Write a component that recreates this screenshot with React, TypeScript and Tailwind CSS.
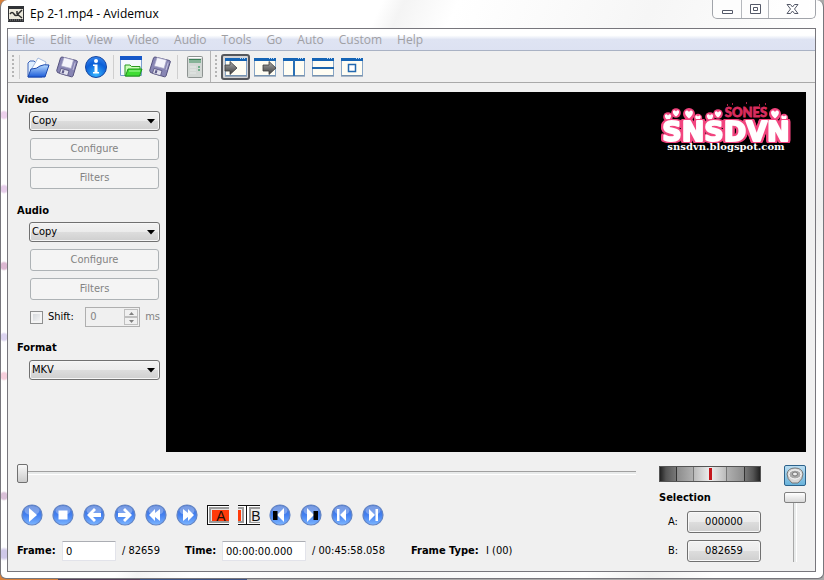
import React from "react";

const menus = ["File", "Edit", "View", "Video", "Audio", "Tools", "Go", "Auto", "Custom", "Help"];

function FolderIcon() {
  return (
    <svg width="24" height="24" viewBox="0 0 24 24" aria-hidden="true">
      <defs>
        <linearGradient id="folder" x1="0" y1="0" x2="0" y2="1">
          <stop offset="0" stopColor="#b9dcff" />
          <stop offset="1" stopColor="#1b5bd8" />
        </linearGradient>
      </defs>
      <path d="M2 22V8l2-2h4l2 2h6v14z" fill="#dfeeff" stroke="#3a62b8" />
      <path d="M5 15 12 3l8 4-3 12z" fill="#fff" stroke="#8fa9d6" strokeWidth=".8" />
      <path d="M2 22 5 14q6 0 9-3 4-2 9-1l-4 12z" fill="url(#folder)" stroke="#1c49ad" />
    </svg>
  );
}

function FloppyIcon() {
  return (
    <svg width="24" height="24" viewBox="0 0 24 24" aria-hidden="true">
      <path d="M7 2 21.500 5.500q1 .3.8 1.400L18 21q-.5 1-1.600.8L2.500 17.500l-.800-2L5.500 3Q6 2 7 2z" fill="#8886b4" stroke="#55527e" />
      <path d="m9 2.500 9.500 2.500-2.400 8.500-9.800-2.500z" fill="#f4f4fb" stroke="#a5a4c4" strokeWidth=".7" />
      <path d="m6 13.500 8 2.200-1.500 5-8-2.300z" fill="#e2e2ee" stroke="#55527e" strokeWidth=".8" />
      <path d="m7.500 15 2 .6-.9 3-2-.6z" fill="#5c5988" />
      <path d="m18 15 2.200-7.500" stroke="#c3c1de" />
    </svg>
  );
}

function InfoIcon() {
  return (
    <svg width="24" height="24" viewBox="0 0 24 24" aria-hidden="true">
      <defs>
        <radialGradient id="info" cx=".5" cy=".85" r=".9">
          <stop offset="0" stopColor="#35b5ff" />
          <stop offset=".6" stopColor="#0c5fd8" />
          <stop offset="1" stopColor="#3f8df0" />
        </radialGradient>
      </defs>
      <circle cx="12" cy="12" r="10.500" fill="url(#info)" stroke="#1747a0" />
      <circle cx="12" cy="6" r="2" fill="#fff" />
      <path d="M9 9.500h4.500V17H15v1.500H9V17h1.500v-6H9z" fill="#fff" />
    </svg>
  );
}

function LoadVideoIcon() {
  return (
    <svg width="24" height="24" viewBox="0 0 24 24" aria-hidden="true">
      <path d="M1.500 1.500h21v19h-21z" fill="#f4f8ff" stroke="#7d9fd0" />
      <path d="M1 1h22v4H1z" fill="#1557c8" />
      <path d="M6 21V10h5l1.500 1.500H21V21z" fill="#c9ffb8" stroke="#2a9a22" />
      <path d="M6.500 21 9 14h14l-2.500 7z" fill="#3fdc34" stroke="#1f9420" />
      <path d="M10 16h11" stroke="#a8ff9c" />
    </svg>
  );
}

function CalculatorIcon() {
  return (
    <svg width="24" height="24" viewBox="0 0 24 24" aria-hidden="true">
      <rect x="4.500" y="1.500" width="15" height="21" rx="1" fill="#d3d8d5" stroke="#8d9391" />
      <path d="M5.500 2.500h13" stroke="#fff" />
      <path d="M6 4h12v4H6z" fill="#86b398" />
      <path d="M6 4.500h12" stroke="#3d8059" />
      <path d="M7 12h6M7 15h6M7 18h6" stroke="#e6eae8" />
      <path d="M15 12h2M15 15h2" stroke="#4fa070" strokeWidth="1.500" />
    </svg>
  );
}

type PaneKind = "input" | "output" | "side" | "top" | "separate";

function PaneIcon({ kind }: { kind: PaneKind }) {
  return (
    <svg width="24" height="22" viewBox="0 0 24 22" aria-hidden="true">
      <defs>
        <linearGradient id="arrow" x1="0" y1="0" x2="0" y2="1">
          <stop offset="0" stopColor="#aaa" />
          <stop offset="1" stopColor="#3c3c3c" />
        </linearGradient>
      </defs>
      <path d="M1.500 2.500h21v17h-21z" fill="#fffdf3" stroke="#86a5c6" />
      <path d="M1 20h22" stroke="#657f9c" />
      <path d="M1 2h22v3H1z" fill="#1564b5" />
      <path d="M16 2.500h6" stroke="#b4d5f5" strokeDasharray="1 1" />
      {kind === "input" && <path d="M1 9h5V5.500l7 6.500-7 6.500V15H1z" fill="url(#arrow)" stroke="#3b3b3b" strokeWidth=".8" />}
      {kind === "output" && <path d="M10 9h6V5.500l7 6.500-7 6.500V15h-6z" fill="url(#arrow)" stroke="#3b3b3b" strokeWidth=".8" />}
      {kind === "side" && <path d="M12 4v16" stroke="#2a70b5" strokeWidth="2" />}
      {kind === "top" && <path d="M1 12h22" stroke="#1d65ac" strokeWidth="2" />}
      {kind === "separate" && <path d="M8.500 8.500h7v7h-7z" fill="#fff" stroke="#2369af" strokeWidth="1.500" />}
    </svg>
  );
}

function Orb({ d, bar }: { d: string; bar?: string }) {
  return (
    <svg width="22" height="22" viewBox="0 0 22 22" aria-hidden="true">
      <defs>
        <linearGradient id="orb" x1="0" y1="0" x2="0" y2="1">
          <stop offset="0" stopColor="#3f6fd2" />
          <stop offset=".5" stopColor="#4480f0" />
          <stop offset="1" stopColor="#7db6ff" />
        </linearGradient>
      </defs>
      <circle cx="11" cy="11" r="10" fill="url(#orb)" stroke="#6284c4" strokeWidth="1.200" />
      <ellipse cx="11" cy="6.500" rx="7.500" ry="4.500" fill="#fff" opacity=".3" />
      <path d={d} fill="#fff" />
      {bar && <path d={bar} fill="#000" />}
    </svg>
  );
}

function MarkerA() {
  return (
    <svg width="22" height="22" viewBox="0 0 22 22" aria-hidden="true">
      <path d="M0 1h22v20H0z" fill="#111" />
      <path d="M1 2h21v18H1z" fill="#fff" />
      <path d="M2 3h20v16H2z" fill="#9c9c9c" />
      <path d="M4 5h18v12H4z" fill="#e2e2e2" />
      <path d="M5 6h17v11H5z" fill="#ff3b0b" />
      <text x="14" y="17" textAnchor="middle" fontSize="14" fill="#201008" fontFamily="Liberation Sans, sans-serif">A</text>
    </svg>
  );
}

function MarkerB() {
  return (
    <svg width="22" height="22" viewBox="0 0 22 22" aria-hidden="true">
      <path d="M0 1h22v20H0z" fill="#111" />
      <path d="M0 2h22v18H0z" fill="#fff" />
      <path d="M0 3h6v16H0zM11 3h11v16H11z" fill="#9c9c9c" />
      <path d="M0 5h4v12H0zM13 5h9v13h-9z" fill="#ececec" />
      <path d="M0 6h3v11H0z" fill="#ff3b0b" />
      <path d="M8.500 1v20" stroke="#111" />
      <text x="18" y="17" textAnchor="middle" fontSize="14" fill="#111" fontFamily="Liberation Sans, sans-serif">B</text>
    </svg>
  );
}

function Heart({ x, y, s }: { x: number; y: number; s: number }) {
  return (
    <g transform={`translate(${x} ${y}) scale(${s})`}>
      <circle r="6" fill="#f2457f" />
      <path d="M0 4.500C-7-1-3-6 0-2 3-6 7-1 0 4.500z" fill="#fff" />
    </g>
  );
}

function ChannelLogo() {
  return (
    <svg width="140" height="60" viewBox="0 0 140 60" className="absolute top-2 right-2.5">
      <text x="90" y="17" textAnchor="middle" fontSize="13" fontWeight="900" fill="#d92c5e" stroke="#d92c5e" strokeWidth=".8" fontFamily="Lato, sans-serif">SONES</text>
      <path d="M71 5h1M76 4h1M90 3h1M103 5h1M109 4h1" stroke="#d92c5e" strokeWidth="1.500" />
      <Heart x={12} y={17} s={0.8} />
      <Heart x={20} y={13} s={0.8} />
      <Heart x={33} y={14} s={1} />
      <Heart x={42} y={18} s={0.7} />
      <Heart x={54} y={17} s={0.8} />
      <Heart x={62} y={14} s={0.8} />
      <Heart x={119} y={14} s={1} />
      <Heart x={128} y={18} s={0.7} />
      <text
        x="70"
        y="41"
        textAnchor="middle"
        fontSize="27"
        fontWeight="700"
        fill="#fff"
        stroke="#fff"
        strokeWidth="2"
        strokeLinejoin="round"
        fontFamily="DejaVu Sans, sans-serif"
        className="[filter:drop-shadow(2px_0_0_#f2457f)_drop-shadow(-2px_0_0_#f2457f)_drop-shadow(0_1px_0_#f2457f)_drop-shadow(0_-1px_0_#f2457f)]"
      >
        SNSDVN
      </text>
      <text x="70" y="50" textAnchor="middle" fontSize="10" fontWeight="700" fill="#fff" fontFamily="DejaVu Serif, serif">snsdvn.blogspot.com</text>
    </svg>
  );
}

function Grip() {
  return <span className="h-6 w-0.5 bg-[repeating-linear-gradient(to_bottom,#b5b5b5_0px,#b5b5b5_2px,transparent_2px,transparent_4px)]" />;
}

function ToolButton({ label, pressed, children }: { label: string; pressed?: boolean; children: React.ReactNode }) {
  return (
    <button
      aria-label={label}
      className={
        pressed
          ? "flex h-[26px] w-[29px] items-center justify-center rounded-[3px] border-2 border-[#55575c] bg-[#d4d4d6]"
          : "flex h-[26px] w-[29px] items-center justify-center"
      }
    >
      {children}
    </button>
  );
}

function Combo({ label, value }: { label: string; value: string }) {
  return (
    <div className="relative ml-3 h-5">
      <select
        aria-label={label}
        defaultValue={value}
        className="block h-5 w-full appearance-none rounded-[3px] border border-[#707070] bg-[linear-gradient(#f2f2f2_0%,#ebebeb_50%,#dddddd_50%,#cfcfcf_100%)] pl-[2px] leading-4 shadow-[inset_0_0_0_1px_#f6f6f6]"
      >
        <option>{value}</option>
      </select>
      <svg width="8" height="5" viewBox="0 0 8 5" className="pointer-events-none absolute top-2 right-[5px]" aria-hidden="true">
        <path d="M0 0h8L4 4.500z" fill="#000" />
      </svg>
    </div>
  );
}

function DisabledButton({ children }: { children: React.ReactNode }) {
  return (
    <button disabled className="mr-px ml-[13px] h-[22px] rounded-[3px] border border-[#adb2b5] bg-[#f4f4f4] text-[#838383]">
      {children}
    </button>
  );
}

function PushButton({ id, children }: { id: string; children: React.ReactNode }) {
  return (
    <button id={id} className="h-[22px] w-[74px] rounded-[3px] border border-[#707070] bg-[linear-gradient(#f2f2f2_0%,#ebebeb_50%,#dddddd_50%,#cfcfcf_100%)] shadow-[inset_0_0_0_1px_#f8f8f8]">
      {children}
    </button>
  );
}

const transport = [
  { label: "Play", d: "M8 4v14l8-7z" },
  { label: "Stop", d: "M6.500 6.500h9v9h-9z" },
  { label: "Previous frame", d: "m4 11 7-7 2 2-3 3h8v4h-8l3 3-2 2z" },
  { label: "Next frame", d: "m18 11-7-7-2 2 3 3H4v4h8l-3 3 2 2z" },
  { label: "Previous intra frame", d: "m4 11 6-6v4l5-4v12l-5-4v4z" },
  { label: "Next intra frame", d: "m18 11-6-6v4L7 5v12l5-4v4z" },
];

const jumps = [
  { label: "Previous black frame", d: "m8 11 7-7v14z", bar: "M4 7h4.500v9H4z" },
  { label: "Next black frame", d: "m14 11-7-7v14z", bar: "M13.500 7H18v9h-4.500z" },
  { label: "First frame", d: "M6 5h2.500v12H6zM9 11l6-6v12z" },
  { label: "Last frame", d: "M13.500 5H16v12h-2.500zM13 11 7 5v12z" },
];

function TitleBar() {
  return (
    <header className="flex h-7 items-start justify-between pl-px">
      <div className="flex h-7 items-center gap-1.5">
        <svg width="16" height="16" viewBox="0 0 16 16" aria-hidden="true">
          <path d="M0 0h16v16H0z" fill="#303236" />
          <path d="M1 3h14v10H1z" fill="#ece9dc" />
          <path d="M2 8q2-3 4 0t4 0l4-4M9 8l5 4M9 5v3" stroke="#2d2d2d" strokeWidth="1.500" fill="none" />
          <path d="M0 14h16" stroke="#888" strokeDasharray="1 1" />
        </svg>
        <h1 className="font-['Open_Sans','Noto_Sans',sans-serif] text-[12px] leading-4">Ep 2-1.mp4 - Avidemux</h1>
      </div>
      <div className="flex h-[19px] rounded-b-[5px] border border-t-0 border-[#a1a4aa] bg-white/60">
        <button aria-label="Minimize" className="flex w-7 items-center justify-center">
          <svg width="13" height="13" viewBox="0 0 13 13"><path d="M1.500 7.500h10v3h-10z" fill="#fff" stroke="#545968" /></svg>
        </button>
        <button aria-label="Maximize" className="flex w-7 items-center justify-center border-x border-[#b5b8bd]">
          <svg width="13" height="13" viewBox="0 0 13 13"><path d="M1.500 1.500h10v9h-10zM4.500 4.500h4v3h-4z" fill="#fff" stroke="#545968" /></svg>
        </button>
        <button aria-label="Close" className="flex w-[46px] items-center justify-center">
          <svg width="13" height="13" viewBox="0 0 13 13"><path d="M1 1.500h3.500l2 2.500 2-2.500H12L8.500 6l3.500 4.500H8.500l-2-2.500-2 2.500H1L4.500 6z" fill="#fff" stroke="#545968" /></svg>
        </button>
      </div>
    </header>
  );
}

function Toolbars() {
  return (
    <div className="flex h-8 items-center border-b border-[#a9a9a9] bg-[#f0f0f0]">
      <div className="flex h-full items-center border-r border-[#b4b4b4] pr-px pl-1">
        <Grip />
        <span className="mr-[3px] ml-[5px] h-6 w-px bg-[#cfcfcf]" />
        <ToolButton label="Open video"><FolderIcon /></ToolButton>
        <ToolButton label="Save video"><FloppyIcon /></ToolButton>
        <ToolButton label="Information"><InfoIcon /></ToolButton>
        <span className="mr-[2px] ml-[3px] h-6 w-px bg-[#cfcfcf]" />
        <ToolButton label="Load project"><LoadVideoIcon /></ToolButton>
        <ToolButton label="Save project"><FloppyIcon /></ToolButton>
        <span className="mr-[2px] ml-[3px] h-6 w-px bg-[#cfcfcf]" />
        <ToolButton label="Calculator"><CalculatorIcon /></ToolButton>
      </div>
      <div className="flex h-full items-center pl-1">
        <Grip />
        <span className="w-1" />
        <ToolButton label="Display input" pressed><PaneIcon kind="input" /></ToolButton>
        <ToolButton label="Display output"><PaneIcon kind="output" /></ToolButton>
        <ToolButton label="Side by side"><PaneIcon kind="side" /></ToolButton>
        <ToolButton label="Top and bottom"><PaneIcon kind="top" /></ToolButton>
        <ToolButton label="Separate window"><PaneIcon kind="separate" /></ToolButton>
      </div>
    </div>
  );
}

function Sidebar() {
  return (
    <aside className="flex w-[152px] flex-col pl-[9px]">
      <section className="flex flex-col gap-[7px]">
        <h2 className="-mb-1 h-4 font-bold">Video</h2>
        <Combo label="Video codec" value="Copy" />
        <DisabledButton>Configure</DisabledButton>
        <DisabledButton>Filters</DisabledButton>
      </section>
      <section className="mt-3.5 flex flex-col gap-[7px]">
        <h2 className="-mb-1 h-4 font-bold">Audio</h2>
        <Combo label="Audio codec" value="Copy" />
        <DisabledButton>Configure</DisabledButton>
        <DisabledButton>Filters</DisabledButton>
        <div className="ml-[13px] flex h-5 items-center">
          <label className="flex items-center gap-[5px]">
            <input type="checkbox" className="size-[13px] appearance-none border border-[#8e8f8f] bg-linear-to-br from-[#cfd2d6] to-[#fafafa] shadow-[inset_0_0_0_2px_#f4f4f4]" />
            Shift:
          </label>
          <div className="ml-auto flex h-5 w-[55px] border border-[#afafaf] p-px">
            <input aria-label="Shift amount" disabled defaultValue="0" className="w-0 flex-1 pl-[3px] text-[#838383]" />
            <div className="flex w-[14px] flex-col">
              <button disabled aria-label="Increase" className="flex h-2 items-center justify-center border border-[#bfbfbf]">
                <svg width="5" height="3" viewBox="0 0 5 3"><path d="M0 3h5L2.500 0z" fill="#808080" /></svg>
              </button>
              <button disabled aria-label="Decrease" className="flex h-2 items-center justify-center border border-[#bfbfbf]">
                <svg width="5" height="3" viewBox="0 0 5 3"><path d="M0 0h5L2.500 3z" fill="#808080" /></svg>
              </button>
            </div>
          </div>
          <span className="ml-[5px] text-[#838383]">ms</span>
        </div>
      </section>
      <section className="mt-[13px] flex flex-col gap-1">
        <h2 className="h-4 font-bold">Format</h2>
        <Combo label="Output format" value="MKV" />
      </section>
    </aside>
  );
}

function Controls() {
  return (
    <footer className="flex gap-[23px] pt-[11px] pr-[9px] pb-[9px] pl-[9px]">
      <div className="flex min-w-0 flex-1 flex-col">
        <input
          type="range"
          aria-label="Position"
          defaultValue={0}
          className="h-5 w-full appearance-none bg-transparent [&::-webkit-slider-runnable-track]:h-1 [&::-webkit-slider-runnable-track]:border-t [&::-webkit-slider-runnable-track]:border-b [&::-webkit-slider-runnable-track]:border-t-[#a0a0a0] [&::-webkit-slider-runnable-track]:border-b-white [&::-webkit-slider-runnable-track]:bg-[#e8eaea] [&::-webkit-slider-thumb]:-mt-2 [&::-webkit-slider-thumb]:h-[19px] [&::-webkit-slider-thumb]:w-[11px] [&::-webkit-slider-thumb]:appearance-none [&::-webkit-slider-thumb]:rounded-[2px] [&::-webkit-slider-thumb]:border [&::-webkit-slider-thumb]:border-[#707070] [&::-webkit-slider-thumb]:bg-linear-to-b [&::-webkit-slider-thumb]:from-[#f8f8f8] [&::-webkit-slider-thumb]:to-[#cccccc]"
        />
        <div className="mt-[21px] flex gap-[9px] pl-1">
          {transport.map((b) => (
            <button key={b.label} aria-label={b.label}><Orb d={b.d} /></button>
          ))}
          <button aria-label="Set start marker"><MarkerA /></button>
          <button aria-label="Set end marker"><MarkerB /></button>
          {jumps.map((b) => (
            <button key={b.label} aria-label={b.label}><Orb d={b.d} bar={b.bar} /></button>
          ))}
        </div>
        <div className="mt-[15px] flex h-5 items-center whitespace-nowrap">
          <label htmlFor="frame" className="w-[45px] font-bold">Frame:</label>
          <input id="frame" defaultValue="0" className="h-5 w-[54px] rounded-[1px] border border-[#e2e3ea] border-t-[#abadb3] bg-white px-[3px]" />
          <span className="w-[69px] pl-1.5">/ 82659</span>
          <label htmlFor="time" className="w-[37px] font-bold">Time:</label>
          <input id="time" defaultValue="00:00:00.000" className="h-5 w-[84px] rounded-[1px] border border-[#e2e3ea] border-t-[#abadb3] bg-white px-[3px]" />
          <span className="w-[105px] pl-1.5">/ 00:45:58.058</span>
          <b className="w-[75px]">Frame Type:</b>
          <span>I (00)</span>
        </div>
      </div>
      <div className="flex w-[102px] flex-col pt-[3px]">
        <input
          type="range"
          aria-label="Jog"
          defaultValue={50}
          className="h-4 w-full appearance-none border border-[#555] bg-[linear-gradient(90deg,#222_0%,#555_6%,#777_16%,#333_16%,#333_17%,#8c8c8c_17%,#b0b0b0_33%,#777_33%,#777_34%,#bbb_34%,#eee_50%,#bbb_66%,#777_66%,#777_67%,#b0b0b0_67%,#8c8c8c_84%,#333_84%,#333_85%,#777_85%,#555_93%,#222_100%)] [&::-webkit-slider-thumb]:h-3 [&::-webkit-slider-thumb]:w-[3px] [&::-webkit-slider-thumb]:appearance-none [&::-webkit-slider-thumb]:bg-[#c4161c]"
        />
        <h2 className="mt-2 h-4 font-bold">Selection</h2>
        <div className="mt-[5px] flex items-center justify-between pl-[9px]">
          <label htmlFor="mark-a">A:</label>
          <PushButton id="mark-a">000000</PushButton>
        </div>
        <div className="mt-[7px] flex items-center justify-between pl-[9px]">
          <label htmlFor="mark-b">B:</label>
          <PushButton id="mark-b">082659</PushButton>
        </div>
      </div>
      <div className="flex w-[22px] flex-col pt-0.5">
        <button aria-label="Mute" className="h-[21px] w-[22px] rounded-[2px] border border-[#2c628b] bg-linear-to-b from-[#b9dcf0] to-[#68b3db]">
          <svg width="20" height="19" viewBox="0 0 20 19" aria-hidden="true">
            <path d="M2 8q1-6 8-6t8 6q0 5-5 9H7Q2 13 2 8z" fill="#d7d7d7" stroke="#777" />
            <ellipse cx="10" cy="8.500" rx="6" ry="4.500" fill="#aaa" stroke="#fff" />
            <ellipse cx="10" cy="8" rx="2.500" ry="2" fill="#eee" stroke="#777" />
          </svg>
        </button>
        <input
          type="range"
          aria-label="Volume"
          defaultValue={100}
          className="mt-1.5 h-[70px] w-[22px] appearance-none bg-transparent [direction:rtl] [writing-mode:vertical-lr] [&::-webkit-slider-runnable-track]:w-1 [&::-webkit-slider-runnable-track]:border-r [&::-webkit-slider-runnable-track]:border-l [&::-webkit-slider-runnable-track]:border-r-white [&::-webkit-slider-runnable-track]:border-l-[#a8a8a8] [&::-webkit-slider-runnable-track]:bg-[#e8eaea] [&::-webkit-slider-thumb]:-ml-[10px] [&::-webkit-slider-thumb]:h-[11px] [&::-webkit-slider-thumb]:w-[22px] [&::-webkit-slider-thumb]:appearance-none [&::-webkit-slider-thumb]:rounded-[2px] [&::-webkit-slider-thumb]:border [&::-webkit-slider-thumb]:border-[#808080] [&::-webkit-slider-thumb]:bg-linear-to-b [&::-webkit-slider-thumb]:from-white [&::-webkit-slider-thumb]:to-[#d8d8d8]"
        />
      </div>
    </footer>
  );
}

export default function App() {
  return (
    <div className="flex min-h-screen flex-col bg-[linear-gradient(90deg,#d8803a_0_7%,#54405a_7%_17%,#3d5384_17%_30%,#aaa_30%)] pb-px font-['DejaVu_Sans_Condensed','Open_Sans',sans-serif] text-[11px] leading-4 text-black">
      <div className="flex flex-1 flex-col rounded-t-[7px] rounded-b-[6px] border border-t-0 border-[#77767c] bg-[radial-gradient(circle_at_3px_115px,#ecd0ec_0_3px,transparent_5px),radial-gradient(circle_at_3px_189px,#e6cdea_0_3px,transparent_5px),radial-gradient(circle_at_3px_266px,#dcb8d2_0_3px,transparent_5px),radial-gradient(circle_at_3px_337px,#dcd4f0_0_3px,transparent_5px),radial-gradient(circle_at_3px_376px,#f6cfdc_0_3px,transparent_5px),radial-gradient(circle_at_3px_496px,#d9c0d8_0_3px,transparent_5px),radial-gradient(circle_at_3px_554px,#cfc8e8_0_4px,transparent_7px),linear-gradient(115deg,#fff_0%,#fff_35%,#f4f4f4_37%,#fff_42%,#f6f6f6_60%,#fff_78%,#f0f0f0_84%,#fff_90%)] pr-[7px] pb-1.5 pl-1.5">
        <TitleBar />
        <main className="flex flex-1 flex-col border border-[#77767c] bg-[#f0f0f0]">
          <nav className="flex h-[22px] items-center gap-[15px] border-b border-[#a9b2c4] bg-linear-to-b from-white from-30% via-[#dfe4f3] via-50% to-[#dde2f2] pl-2 font-['Open_Sans','Noto_Sans',sans-serif] text-[12px] text-[#a0a0a4]">
            {menus.map((m) => (
              <button key={m} disabled>{m}</button>
            ))}
          </nav>
          <Toolbars />
          <div className="flex flex-1 gap-1.5 pt-[9px] pr-[9px]">
            <Sidebar />
            <div role="img" aria-label="Video preview" className="relative min-h-[360px] flex-1 bg-black">
              <ChannelLogo />
            </div>
          </div>
          <Controls />
        </main>
      </div>
    </div>
  );
}
